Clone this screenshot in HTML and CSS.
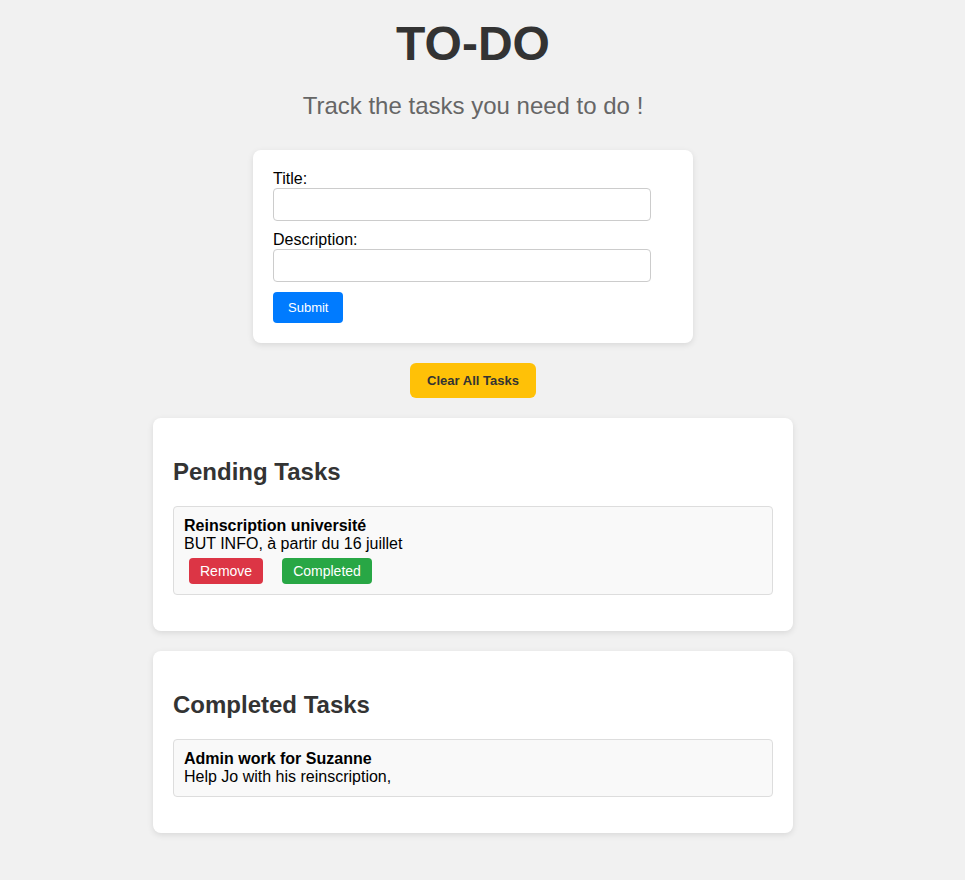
FILE: index.html
```html
<!DOCTYPE html>
<html lang="en">
<head>
<meta charset="utf-8">
<meta name="viewport" content="width=device-width, initial-scale=1">
<title>TO-DO</title>
<link rel="stylesheet" href="styles.css">
</head>
<body>
<main class="page">
  <h1 class="title">TO-DO</h1>
  <p class="subtitle">Track the tasks you need to do !</p>
  <form class="card task-form">
    <label for="title">Title:</label>
    <input type="text" id="title" name="title">
    <label for="description">Description:</label>
    <input type="text" id="description" name="description">
    <button type="submit" class="submit">Submit</button>
  </form>
  <button type="button" class="clear">Clear All Tasks</button>
  <section class="card list-card">
    <h2>Pending Tasks</h2>
    <ul class="tasks">
      <li class="task">
        <strong>Reinscription université</strong>
        <p>BUT INFO, à partir du 16 juillet</p>
        <div class="actions">
          <button type="button" class="remove">Remove</button>
          <button type="button" class="complete">Completed</button>
        </div>
      </li>
    </ul>
  </section>
  <section class="card list-card">
    <h2>Completed Tasks</h2>
    <ul class="tasks">
      <li class="task">
        <strong>Admin work for Suzanne</strong>
        <p>Help Jo with his reinscription,</p>
      </li>
    </ul>
  </section>
</main>
</body>
</html>
```
FILE: styles.css
```css
* {
  box-sizing: border-box;
}

body {
  margin: 0;
  padding: 16px 19px 20px 0;
  background: #f1f1f1;
  color: #000;
  font: 16px/18px "Liberation Sans", Arial, sans-serif;
}

.page {
  display: flex;
  flex-direction: column;
  align-items: center;
}

.title {
  margin: 0;
  color: #333;
  font-size: 48px;
  line-height: 56px;
}

.subtitle {
  margin: 20px 0 30px;
  color: #666;
  font-size: 24px;
  line-height: 28px;
}

.card {
  width: 100%;
  margin-bottom: 20px;
  padding: 20px;
  border-radius: 8px;
  background: #fff;
  box-shadow: 0 2px 6px rgba(0, 0, 0, 0.1);
}

.task-form {
  max-width: 440px;
}

.task-form label {
  display: block;
}

.task-form input {
  display: block;
  width: calc(100% - 22px);
  height: 33px;
  margin-bottom: 10px;
  padding: 8px;
  border: 1px solid #ccc;
  border-radius: 4px;
}

button {
  border: 0;
  border-radius: 4px;
  color: #fff;
  font-family: inherit;
  cursor: pointer;
}

.submit {
  display: block;
  padding: 8px 15px;
  background: #007bff;
  font-size: 13px;
  line-height: 15px;
}

.clear {
  margin-bottom: 20px;
  padding: 10px 17px;
  border-radius: 6px;
  background: #ffc107;
  color: #333;
  font-size: 13px;
  font-weight: bold;
  line-height: 15px;
}

.list-card {
  max-width: 640px;
}

.list-card h2 {
  margin: 20px 0;
  color: #333;
  font-size: 24px;
  line-height: 28px;
}

.tasks {
  margin: 0 0 16px;
  padding: 0;
  list-style: none;
}

.task {
  padding: 10px;
  border: 1px solid #ddd;
  border-radius: 4px;
  background: #f9f9f9;
}

.task strong {
  display: block;
}

.task p {
  margin: 0;
}

.actions {
  display: flex;
  gap: 19px;
  padding: 5px 5px 0;
}

.actions button {
  padding: 5px 11px;
  font-size: 14px;
  line-height: 16px;
}

.remove {
  background: #dc3545;
}

.complete {
  background: #28a745;
}
```
